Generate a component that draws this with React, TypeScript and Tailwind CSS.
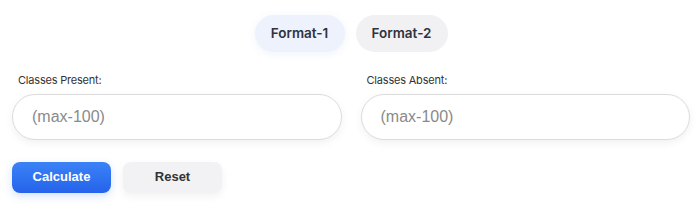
import { useState } from 'react';

export default function App() {
    const [format, setFormat] = useState(1);
    const [present, setPresent] = useState('');
    const [absent, setAbsent] = useState('');

    return (
        <div className="w-[700px] h-[208px] bg-white pl-3 pr-[10px] pt-[15px]" style={{ fontFamily: 'Inter, sans-serif' }}>
            {/* Format toggle */}
            <div className="flex justify-center gap-[11px]">
                <button
                    onClick={() => setFormat(1)}
                    className={`h-[37px] w-[90px] rounded-full text-[13.5px] font-semibold text-[#2f3340] ${format === 1 ? 'bg-[#eef2fd] shadow-[0_2px_8px_rgba(80,100,200,0.08)]' : 'bg-[#f1f1f3]'}`}
                >
                    Format-1
                </button>
                <button
                    onClick={() => setFormat(2)}
                    className={`h-[37px] w-[92px] rounded-full text-[13.5px] font-semibold text-[#2f3340] ${format === 2 ? 'bg-[#eef2fd]' : 'bg-[#f1f1f3]'}`}
                >
                    Format-2
                </button>
            </div>

            {/* Inputs */}
            <div className="grid grid-cols-2 gap-[19px] mt-[20px]">
                <div className="flex flex-col">
                    <label className="ml-[6px] text-[11px] text-[#333] tracking-[-0.2px]">Classes Present:</label>
                    <input
                        value={present}
                        onChange={(e) => setPresent(e.target.value)}
                        placeholder="(max-100)"
                        className="mt-[5px] h-[46px] rounded-full border border-[#dcdcdc] bg-white px-[19px] text-[16px] text-[#333] placeholder:text-[#8a8a8a] shadow-[0_3px_8px_rgba(0,0,0,0.06)] outline-none"
                        style={{ fontFamily: '"Liberation Sans", Arial, sans-serif' }}
                    />
                </div>
                <div className="flex flex-col">
                    <label className="ml-[6px] text-[11px] text-[#333] tracking-[-0.2px]">Classes Absent:</label>
                    <input
                        value={absent}
                        onChange={(e) => setAbsent(e.target.value)}
                        placeholder="(max-100)"
                        className="mt-[5px] h-[46px] rounded-full border border-[#dcdcdc] bg-white px-[19px] text-[16px] text-[#333] placeholder:text-[#8a8a8a] shadow-[0_3px_8px_rgba(0,0,0,0.06)] outline-none"
                        style={{ fontFamily: '"Liberation Sans", Arial, sans-serif' }}
                    />
                </div>
            </div>

            {/* Actions */}
            <div className="flex gap-[12px] mt-[22px]" style={{ fontFamily: '"Liberation Sans", Arial, sans-serif' }}>
                <button className="h-[31px] w-[99px] rounded-lg bg-gradient-to-b from-[#3b82f6] to-[#2563eb] text-[13px] font-bold text-white shadow-[0_3px_8px_rgba(37,99,235,0.2)]">
                    Calculate
                </button>
                <button
                    onClick={() => { setPresent(''); setAbsent(''); }}
                    className="h-[31px] w-[99px] rounded-lg bg-[#f2f2f4] text-[13px] font-bold text-[#333] shadow-[0_3px_8px_rgba(0,0,0,0.06)]"
                >
                    Reset
                </button>
            </div>
        </div>
    );
}
